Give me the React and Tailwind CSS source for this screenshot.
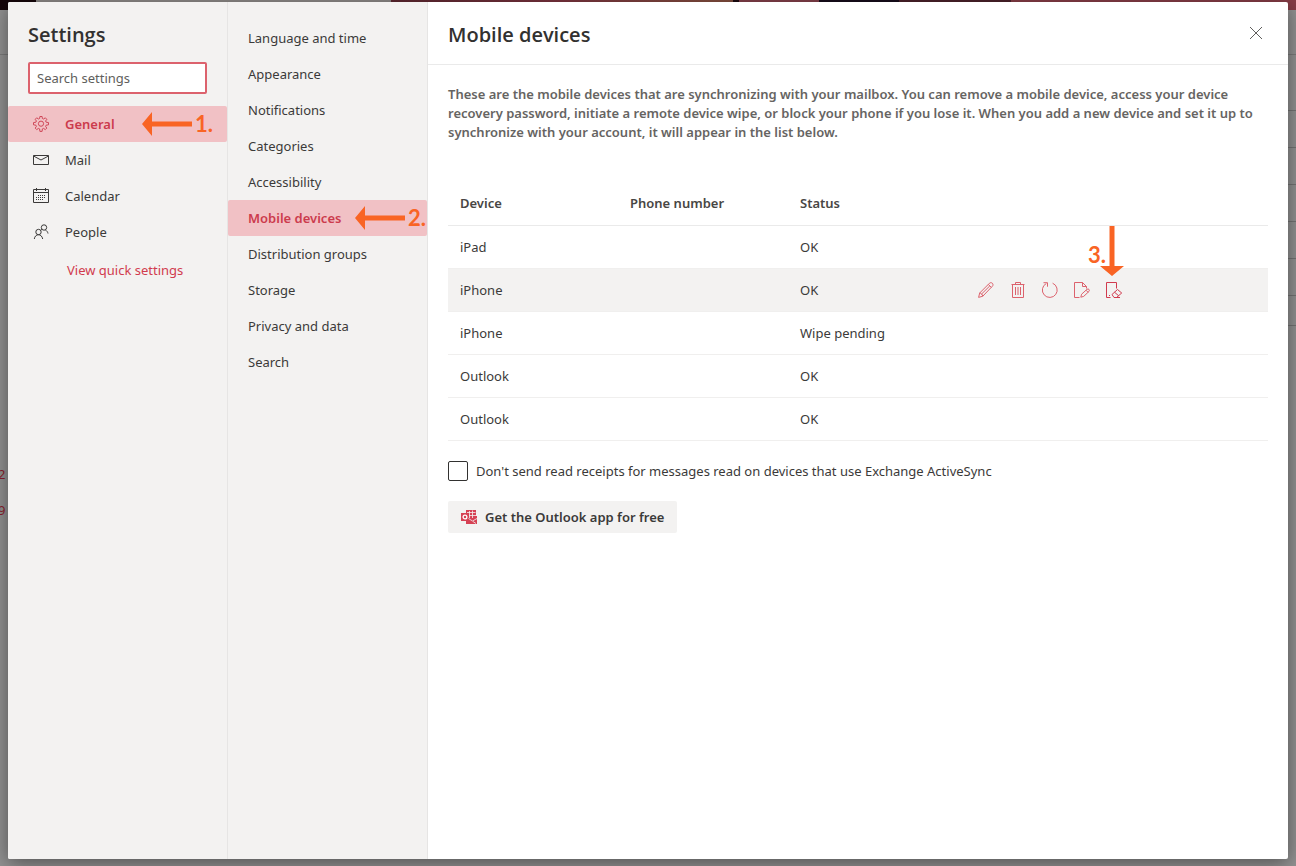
import { useState } from "react";

const categories = [
  { id: "general", label: "General", icon: GearIcon },
  { id: "mail", label: "Mail", icon: MailIcon },
  { id: "calendar", label: "Calendar", icon: CalendarIcon },
  { id: "people", label: "People", icon: PeopleIcon },
];

const sections = [
  "Language and time",
  "Appearance",
  "Notifications",
  "Categories",
  "Accessibility",
  "Mobile devices",
  "Distribution groups",
  "Storage",
  "Privacy and data",
  "Search",
];

const devices = [
  { id: 1, name: "iPad", phone: "", status: "OK" },
  { id: 2, name: "iPhone", phone: "", status: "OK" },
  { id: 3, name: "iPhone", phone: "", status: "Wipe pending" },
  { id: 4, name: "Outlook", phone: "", status: "OK" },
  { id: 5, name: "Outlook", phone: "", status: "OK" },
];

const actions = [
  { label: "Edit", icon: PencilIcon },
  { label: "Delete", icon: TrashIcon },
  { label: "Sync", icon: SyncIcon },
  { label: "Recovery password", icon: PageEditIcon },
  { label: "Wipe device", icon: WipeIcon },
];

function Icon({ children }) {
  return (
    <svg
      width="16"
      height="16"
      viewBox="0 0 16 16"
      fill="none"
      stroke="currentColor"
      strokeWidth="1"
      aria-hidden="true"
      className="shrink-0"
    >
      {children}
    </svg>
  );
}

function GearIcon() {
  return (
    <Icon>
      <path
        d="M6.600 2.500 6.900.5h2.200l.3 2 1.200.5 1.700-1.200 1.500 1.500L12.600 5l.5 1.200 2.400.4v2.200l-2.400.4-.5 1.200 1.200 1.700-1.500 1.500-1.700-1.200-1.200.5-.3 2.500H6.900l-.3-2.500-1.200-.5-1.700 1.200-1.500-1.500 1.200-1.700-.5-1.200-2.400-.4V6.600l2.400-.4L3.400 5 2.200 3.300l1.500-1.500L5.400 3z"
        strokeWidth="0.9"
      />
      <circle cx="8" cy="7.700" r="2.600" strokeWidth="0.9" />
    </Icon>
  );
}

function MailIcon() {
  return (
    <Icon>
      <path d="M.5 3.500h15v9H.5z" />
      <path d="M.5 4 8 8l7.500-4" />
    </Icon>
  );
}

function CalendarIcon() {
  return (
    <Icon>
      <path d="M.5 1.500h15v13H.5zM.5 4.500h15M3.500 0v3M12.500 0v3" />
      <path d="M5 7.500h8M3 9.500h10M3 11.500h8" strokeDasharray="1 1" />
    </Icon>
  );
}

function PeopleIcon() {
  return (
    <Icon>
      <circle cx="11" cy="3.500" r="2.700" />
      <path d="M12.500 6.200c1.300.5 2.200 1.700 2.500 3.300" />
      <circle cx="5.500" cy="8" r="2.700" />
      <path d="M1.300 15c.3-2.500 2-4.300 4.200-4.300S9.200 12.500 9.700 15M7.600 6.300c.4-.5.9-.8 1.600-1" />
    </Icon>
  );
}

function PencilIcon() {
  return (
    <Icon>
      <path d="M.6 15.400 1.700 11l9.700-9.700c.8-.8 2.100-.8 2.900-.1.900.8.900 2.200.1 3L4.800 14.200zM10.300 2.400l3 3M1.700 11c1.500.2 2.700 1.500 3.100 3.200M11.800 3.900l-8.500 8.400" />
    </Icon>
  );
}

function TrashIcon() {
  return (
    <Icon>
      <path d="M1.500 2.500h13M5.500 2.500v-2h5v2M2.500 2.500v13h11v-13M5.500 5v8M8 5v8M10.500 5v8" />
    </Icon>
  );
}

function SyncIcon() {
  return (
    <Icon>
      <path d="M10.600 1.200A7.400 7.400 0 1 1 4.300 1.500M1.500.7h4v4" />
    </Icon>
  );
}

function PageEditIcon() {
  return (
    <Icon>
      <path d="M5.500 15.500h-5V.5h8l4 4v2M8.500.5v4h4" />
      <path d="m6.800 15.200.8-3 5.400-4.900c1.400-1.100 3.100.6 2 2.100l-5.300 5zM12 8.200l2.100 2.100" />
    </Icon>
  );
}

function WipeIcon() {
  return (
    <Icon>
      <path d="M10.500 6.500v-6H.5v15h4M3 13.500h1" />
      <path d="m6 12.500 5.500-5 4.200 3.500-5.200 4.500H8zM8.500 10.200l4.200 3.600M8 15.500h6" />
    </Icon>
  );
}

function OutlookIcon() {
  return (
    <svg width="16" height="16" viewBox="0 0 16 16" className="shrink-0 text-[#d64254]" aria-hidden="true">
      <path fill="currentColor" d="M5 1h10v6h1v8H5v-3H0V4h5z" />
      <path
        stroke="#f3f2f1"
        strokeWidth=".8"
        d="M8.500 2v7M11.500 1.500V9M6 3.500h8.500M8 6.500h7M7.500 9.500l4 2.500 4.500-2.500M12 12.500l3 2"
        fill="none"
      />
      <circle cx="4" cy="8" r="1.900" fill="none" stroke="#fff" strokeWidth="1.300" />
    </svg>
  );
}

function LeftArrow() {
  return (
    <svg width="50" height="24" viewBox="0 0 50 24" fill="#f96424" aria-hidden="true">
      <path d="M0 12 10 0v9.500h40v5H10V24z" />
    </svg>
  );
}

function DownArrow() {
  return (
    <svg width="24" height="50" viewBox="0 0 24 50" fill="#f96424" aria-hidden="true">
      <path d="M12 50 0 40h9.500V0h5v40H24z" />
    </svg>
  );
}

/* Dimmed mailbox behind the dialog */
function Backdrop() {
  return (
    <div className="absolute inset-0 overflow-hidden bg-[#929292]" aria-hidden="true">
      <div className="flex h-2.5">
        <div className="w-9 bg-[#16070b]" />
        <div className="w-[355px] bg-[#8e8a88]" />
        <div className="w-[342px] bg-linear-to-r from-[#5c2730] via-[#7c343f] to-[#84503f]" />
        <div className="w-1.5 bg-[#1b0a10]" />
        <div className="w-20 bg-[#83404a]" />
        <div className="w-20 bg-[#180d1c]" />
        <div className="w-[112px] bg-[#4b222b]" />
        <div className="flex-1 bg-[#873d47]" />
      </div>
      <div className="h-[45px] border-b border-[#7b7b7b]" />
      <div className="flex justify-between">
        <div className="flex w-2 flex-col items-start pt-[401px] text-[13px] leading-9 text-[#8a1f2d]">
          <span className="-ml-0.5">2</span>
          <span className="-ml-0.5">9</span>
        </div>
        <div className="w-2 pt-[19px]">
          {[1, 2, 3, 4, 5, 6].map((n) => (
            <div key={n} className="h-[37px] border-b border-[#747474]" />
          ))}
          <div className="h-[30px] border-b border-[#747474]" />
        </div>
      </div>
    </div>
  );
}

function App() {
  const [category, setCategory] = useState("general");
  const [section, setSection] = useState("Mobile devices");
  const [activeDevice, setActiveDevice] = useState(2);
  const [noReceipts, setNoReceipts] = useState(false);

  return (
    <div className="relative flex min-h-screen flex-col px-2 pt-0.5 pb-[7px] font-['Noto_Sans','Segoe_UI',sans-serif] text-[13px] leading-5 text-[#3b3a39]">
      <Backdrop />

      <div
        role="dialog"
        aria-labelledby="settings-title"
        className="relative flex flex-1 rounded-xs bg-white shadow-[0_4px_20px_rgba(0,0,0,0.45)]"
      >
        {/* Categories */}
        <nav className="w-55 shrink-0 rounded-l-xs border-r border-[#e6e5e4] bg-[#f3f2f1]">
          <h1
            id="settings-title"
            className="px-5 pt-[19px] font-['Open_Sans',sans-serif] text-xl leading-7 font-semibold text-[#323130]"
          >
            Settings
          </h1>
          <div className="px-5 pt-[13px] pb-3">
            <input
              type="text"
              aria-label="Search settings"
              placeholder="Search settings"
              className="block h-8 w-full rounded-xs border-2 border-[#dc626d] bg-white px-[7px] outline-none placeholder:text-[#605e5c]"
            />
          </div>
          <ul>
            {categories.map(({ id, label, icon: CategoryIcon }) => (
              <li key={id} className="relative">
                <button
                  onClick={() => setCategory(id)}
                  className={`flex h-9 w-full items-center gap-4 rounded-xs px-[25px] ${
                    category === id ? "bg-[#f1c1c5] font-semibold text-[#cc3b4d]" : ""
                  }`}
                >
                  <CategoryIcon />
                  {label}
                </button>
                {id === "general" && (
                  <div className="pointer-events-none absolute inset-y-0 right-3.5 flex items-center gap-[3px] font-[Lato,sans-serif] text-[22px] font-bold text-[#f96424]">
                    <LeftArrow />
                    1.
                  </div>
                )}
              </li>
            ))}
          </ul>
          <a href="#quick" className="mt-2.5 ml-[59px] inline-block text-[#d13b4e]">
            View quick settings
          </a>
        </nav>

        {/* Sections */}
        <nav className="w-50 shrink-0 border-r border-[#e6e5e4] bg-[#f3f2f1] pt-[18px]">
          <ul>
            {sections.map((name) => (
              <li key={name} className="relative">
                <button
                  onClick={() => setSection(name)}
                  className={`flex h-9 w-full items-center rounded-xs px-5 ${
                    section === name ? "bg-[#f1c1c5] font-semibold text-[#cc3b4d]" : ""
                  }`}
                >
                  {name}
                </button>
                {name === "Mobile devices" && (
                  <div className="pointer-events-none absolute inset-y-0 right-px flex items-center gap-[3px] font-[Lato,sans-serif] text-[22px] font-bold text-[#f96424]">
                    <LeftArrow />
                    2.
                  </div>
                )}
              </li>
            ))}
          </ul>
        </nav>

        {/* Content */}
        <main className="min-w-0 flex-1">
          <header className="flex h-[63px] items-center justify-between border-b border-[#eaeaea] px-5">
            <h2 className="pt-1 font-['Open_Sans',sans-serif] text-xl leading-7 font-semibold text-[#323130]">
              Mobile devices
            </h2>
            <button aria-label="Close" className="flex size-6 items-center justify-center text-[#605e5c]">
              <Icon>
                <path d="m2 2 12 12M14 2 2 14" />
              </Icon>
            </button>
          </header>

          <div className="px-5 pt-5">
            <p className="leading-[19px] font-semibold text-[#666462]">
              These are the mobile devices that are synchronizing with your mailbox. You can remove a
              mobile device, access your device recovery password, initiate a remote device wipe, or
              block your phone if you lose it. When you add a new device and set it up to synchronize
              with your account, it will appear in the list below.
            </p>

            <div className="relative mt-10">
              <table className="w-full table-fixed border-separate border-spacing-0 text-left">
                <thead>
                  <tr className="*:h-11 *:border-b *:border-[#eaeaea] *:px-3 *:pb-0.5 *:font-semibold *:text-[#484644]">
                    <th className="w-[170px]">Device</th>
                    <th className="w-[170px]">Phone number</th>
                    <th className="w-[170px]">Status</th>
                    <td />
                  </tr>
                </thead>
                <tbody>
                  {devices.map((device) => (
                    <tr
                      key={device.id}
                      onMouseEnter={() => setActiveDevice(device.id)}
                      className={`*:h-[43px] *:border-b *:border-[#f0efee] *:px-3 ${
                        activeDevice === device.id ? "bg-[#f3f2f1]" : ""
                      }`}
                    >
                      <td>{device.name}</td>
                      <td>{device.phone}</td>
                      <td>{device.status}</td>
                      <td>
                        {activeDevice === device.id && (
                          <div className="flex text-[#dc626d]">
                            {actions.map(({ label, icon: ActionIcon }) => (
                              <button
                                key={label}
                                aria-label={label}
                                className="flex h-8 w-8 items-center justify-center last:text-[#d13b4e]"
                              >
                                <ActionIcon />
                              </button>
                            ))}
                          </div>
                        )}
                      </td>
                    </tr>
                  ))}
                </tbody>
              </table>
              <div className="pointer-events-none absolute top-11 left-[640px] flex items-center font-[Lato,sans-serif] text-[22px] font-bold text-[#f96424]">
                <span className="pt-2">3.</span>
                <span className="-ml-1.5">
                  <DownArrow />
                </span>
              </div>
            </div>

            <label className="mt-5 flex items-center gap-2">
              <input
                type="checkbox"
                checked={noReceipts}
                onChange={(e) => setNoReceipts(e.target.checked)}
                className="size-5 appearance-none rounded-xs border border-[#323130] bg-white checked:bg-[#d13b4e]"
              />
              Don't send read receipts for messages read on devices that use Exchange ActiveSync
            </label>

            <button className="mt-5 flex h-8 items-center gap-2 rounded-xs bg-[#f3f2f1] px-[13px] font-semibold">
              <OutlookIcon />
              Get the Outlook app for free
            </button>
          </div>
        </main>
      </div>
    </div>
  );
}

export default App;
